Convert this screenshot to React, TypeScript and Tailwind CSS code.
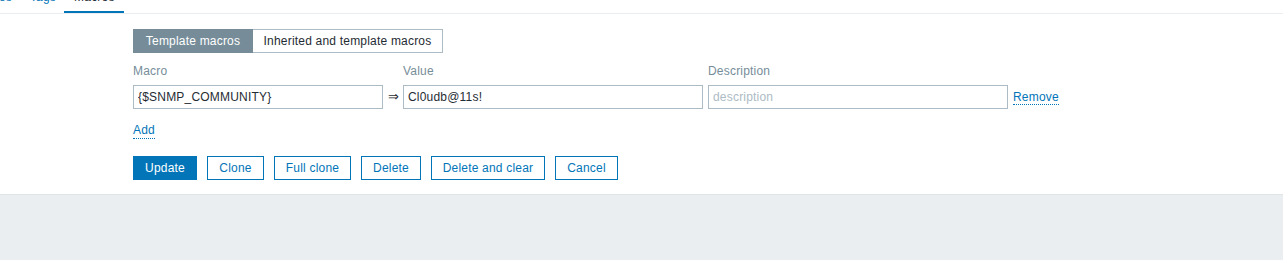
import React from "react";

const tabs = [
  { id: "linked", label: "Linked templates" },
  { id: "tags", label: "Tags" },
  { id: "macros", label: "Macros" },
];

const buttons = [
  { label: "Clone", w: "w-[57px]" },
  { label: "Full clone", w: "w-[77px]" },
  { label: "Delete", w: "w-[60px]" },
  { label: "Delete and clear", w: "w-[114px]" },
  { label: "Cancel", w: "w-[63px]" },
];

export default function App() {
  return (
    <div className="w-[1283px] h-[260px] bg-[#ebeef0] text-[12px] tracking-[0.2px] text-[#1f2c33] font-['Liberation_Sans',Arial,sans-serif] overflow-hidden">
      {/* White form panel */}
      <div className="bg-white border-b border-[#dfe4e7]">
        {/* Tab strip, scrolled so only the bottom of it shows */}
        <div className="h-[14px] overflow-hidden border-b border-[#ebeef0] flex items-end">
          <div className="flex ml-[-92px] mb-[-1px]">
            {tabs.map((tab) => {
              const isActive = tab.id === "macros";
              return (
                <div
                  key={tab.id}
                  className={`leading-[14px] pb-[7px] border-b-[3px] ${
                    isActive
                      ? "px-[10px] border-[#0275b8] text-[#1f2c33] w-[60px]"
                      : "pl-[10px] pr-[8px] border-transparent text-[#0275b8]"
                  }`}
                >
                  {tab.label}
                </div>
              );
            })}
          </div>
        </div>

        <div className="pl-[133px] pt-[15px] pb-[14px]">
          {/* Segmented radio */}
          <div className="flex h-[24px]">
            <div className="w-[120px] flex items-center justify-center bg-[#768d99] text-white border border-[#768d99]">Template macros</div>
            <div className="w-[190px] flex items-center justify-center bg-white border border-l-0 border-[#acbbc4]">Inherited and template macros</div>
          </div>

          {/* Macro table */}
          <div className="grid grid-cols-[250px_10px_300px_300px_auto] gap-x-[5px] mt-[11px] items-center">
            <div className="leading-[14px] text-[#768d99]">Macro</div>
            <div />
            <div className="leading-[14px] text-[#768d99]">Value</div>
            <div className="leading-[14px] text-[#768d99]">Description</div>
            <div />

            <input
              className="mt-[7px] h-[24px] px-1 border border-[#acbbc4] outline-none bg-white"
              defaultValue="{$SNMP_COMMUNITY}"
            />
            <div className="mt-[7px] text-center leading-[14px] font-['DejaVu_Sans',sans-serif] text-[13px] tracking-normal">⇒</div>
            <input
              className="mt-[7px] h-[24px] px-1 border border-[#acbbc4] outline-none bg-white"
              defaultValue="Cl0udb@11s!"
            />
            <input
              className="mt-[7px] h-[24px] px-1 border border-[#acbbc4] outline-none bg-white placeholder:text-[#acbbc4]"
              placeholder="description"
            />
            <div className="mt-[7px]">
              <span className="text-[#0275b8] leading-[14px] border-b border-dotted border-[#0275b8]">Remove</span>
            </div>
          </div>

          <div className="mt-[14px] leading-[14px]">
            <span className="inline-block text-[#0275b8] leading-[15px] border-b border-dotted border-[#0275b8]">Add</span>
          </div>

          {/* Form actions */}
          <div className="flex gap-[10px] mt-[17px]">
            <button className="h-[24px] w-[64px] bg-[#0275b8] border border-[#0275b8] text-white">Update</button>
            {buttons.map((b) => (
              <button key={b.label} className={`h-[24px] ${b.w} bg-white border border-[#0275b8] text-[#0275b8]`}>
                {b.label}
              </button>
            ))}
          </div>
        </div>
      </div>
    </div>
  );
}
